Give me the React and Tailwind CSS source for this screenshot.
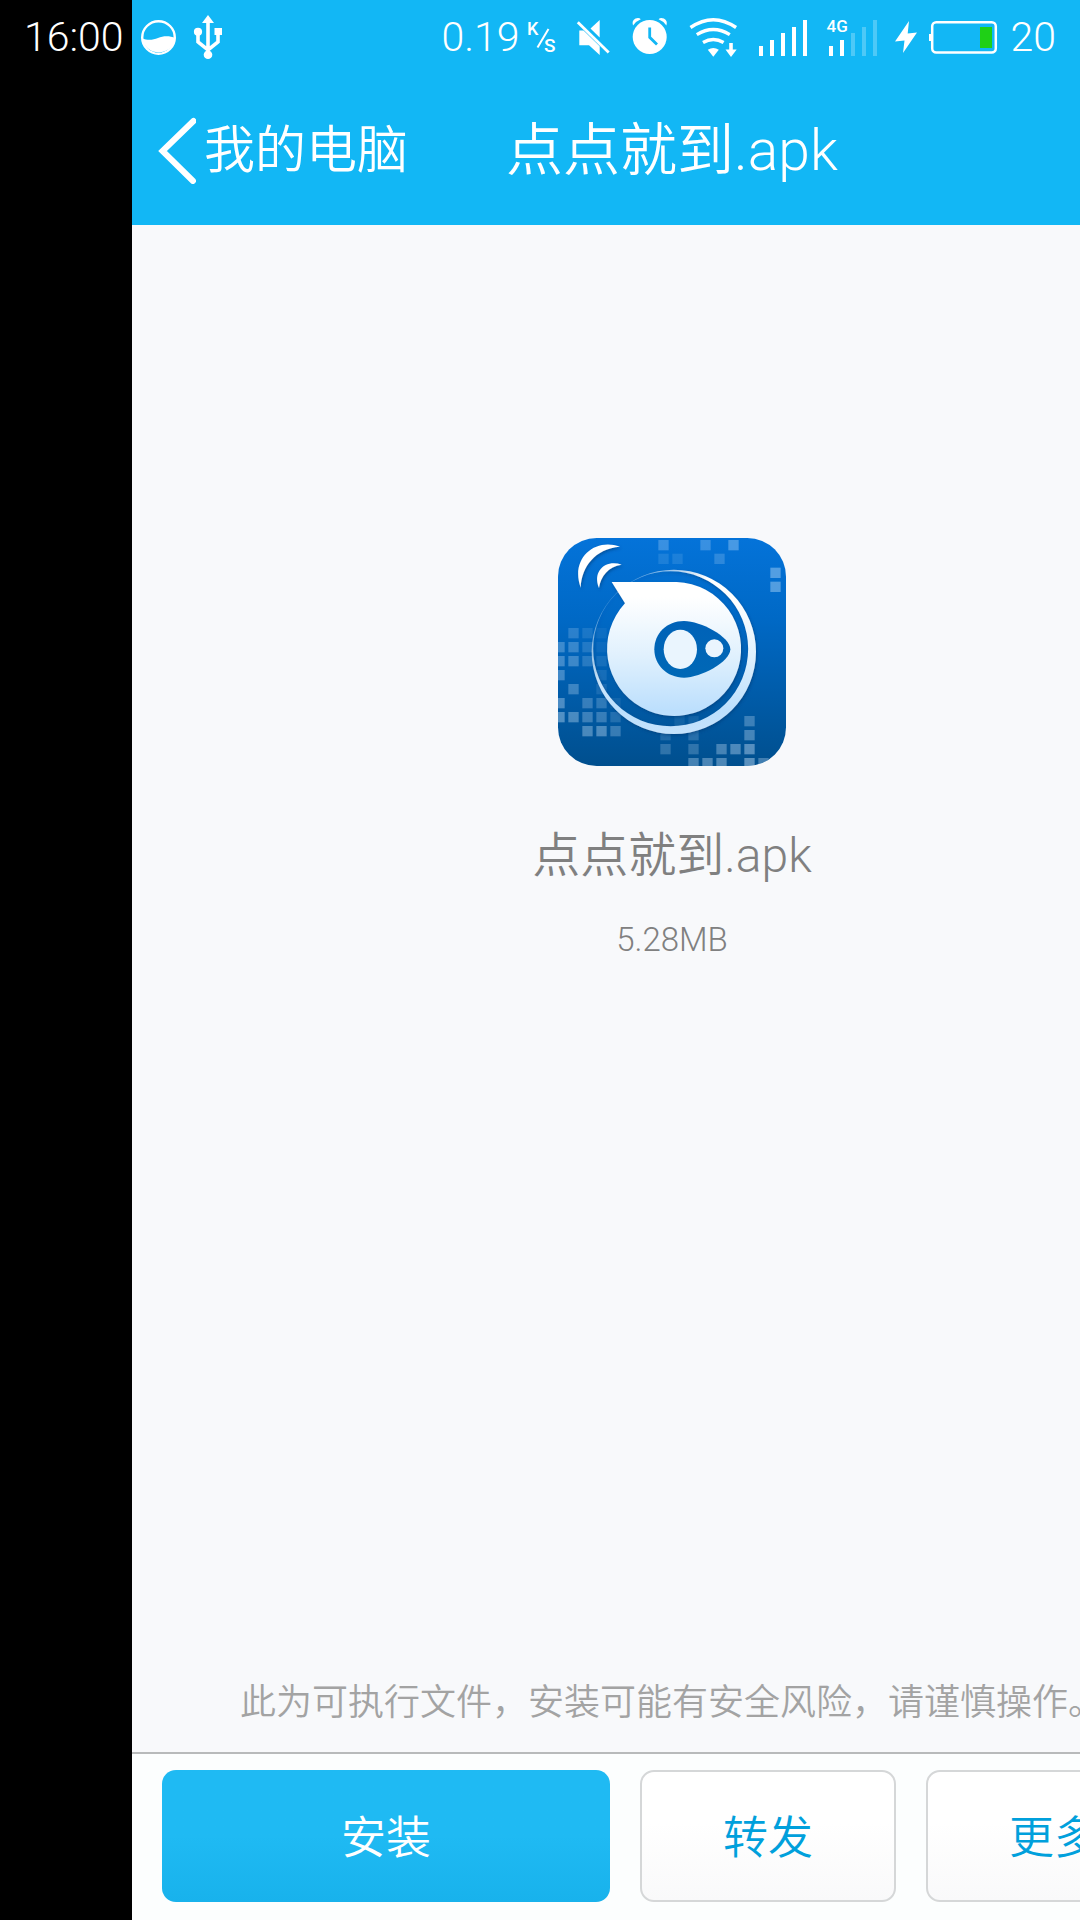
import React from "react";

const FONT = "font-['Roboto','Noto_Sans_CJK_SC',sans-serif]";

function DataSaverIcon() {
  return (
    <svg className="w-9 h-[75px] shrink-0" viewBox="141 0 36 75" aria-hidden="true">
      <circle cx="158.5" cy="37.5" r="16.3" fill="none" stroke="#fff" strokeWidth="2.4" />
      <path d="M142 38.5 C148 40.5 153 40 158 38 C163 36 169 35.5 175.5 38 A17 17 0 0 1 142 38.5Z" fill="#fff" />
    </svg>
  );
}

function UsbIcon() {
  return (
    <svg className="w-[30px] h-[75px] shrink-0" viewBox="193 0 30 75" fill="#fff" aria-hidden="true">
      <path d="M208 15 L214 23 H202Z" />
      <circle cx="208" cy="54.7" r="4.3" />
      <circle cx="198" cy="31.8" r="4.1" />
      <rect x="214.5" y="28" width="7.5" height="7" />
      <path d="M208 21 V55 M198 32 V42 L208 50 L218 42 V33" fill="none" stroke="#fff" strokeWidth="3.6" />
    </svg>
  );
}

function SpeedUnit() {
  return (
    <svg className="w-[37px] h-[75px] shrink-0" viewBox="524 0 37 75" fill="#fff" role="img" aria-label="K/S">
      <text x="527" y="35" fontSize="18" fontWeight="500" fontFamily="Roboto, sans-serif">K</text>
      <path d="M548.5 29 L537.5 47.5" stroke="#fff" strokeWidth="2" />
      <text x="544" y="52" fontSize="19" fontWeight="500" fontFamily="Roboto, sans-serif">S</text>
    </svg>
  );
}

function MuteIcon() {
  return (
    <svg className="w-[42px] h-[75px] shrink-0" viewBox="573 0 42 75" fill="#fff" aria-hidden="true">
      <path d="M599.7 20 V37.5 L590.5 28.6Z" />
      <path d="M579.3 30.5 H583.5 L599.7 46.2 V55 L589 45.3 H579.3Z" />
      <path d="M577.8 22.3 L608.7 52.5" stroke="#fff" strokeWidth="2.8" />
    </svg>
  );
}

function AlarmIcon() {
  return (
    <svg className="w-[45px] h-[75px] shrink-0" viewBox="627 0 45 75" fill="#fff" aria-hidden="true">
      <circle cx="649.7" cy="37" r="17" />
      <path d="M633 25.5 Q631.5 20.5 635.5 18.6 Q639 17.3 640.8 19.3 Q635.5 21.5 633 25.5Z" />
      <path d="M666.4 25.5 Q667.9 20.5 663.9 18.6 Q660.4 17.3 658.6 19.3 Q663.9 21.5 666.4 25.5Z" />
      <path d="M649.7 27.5 V37.3 L657 44.5" fill="none" stroke="#12b7f5" strokeWidth="2.8" />
    </svg>
  );
}

function WifiIcon() {
  return (
    <svg className="w-[57px] h-[75px] shrink-0" viewBox="684 0 57 75" fill="#fff" aria-hidden="true">
      <path
        d="M690.5 27.5 Q713.3 11.8 736.1 27.5 M696.8 34.6 Q713.3 24.5 729.8 34.6 M703 42.5 Q713.3 36.5 723.6 42.5"
        fill="none"
        stroke="#fff"
        strokeWidth="3.4"
      />
      <path d="M707.8 49.8 Q713.3 46.4 718.8 49.8 L713.3 56.8Z" />
      <path d="M729.2 43 H732.8 V49.5 H736.7 L731 57 L725.5 49.5 H729.2Z" />
    </svg>
  );
}

function SignalFull() {
  return (
    <svg className="w-[59px] h-[75px] shrink-0" viewBox="753 0 59 75" fill="#fff" aria-hidden="true">
      <path d="M759 46h4v10h-4z M770 40h4v16h-4z M781 33h4v23h-4z M792 27h4v29h-4z M803 20h4v36h-4z" />
    </svg>
  );
}

function Signal4G() {
  return (
    <svg className="w-[55px] h-[75px] shrink-0" viewBox="824 0 55 75" fill="#fff" role="img" aria-label="4G">
      <text x="826.5" y="32" fontSize="17" fontWeight="500" fontFamily="Roboto, sans-serif">4G</text>
      <path d="M829 46h4v10h-4z M840 40h4v16h-4z" />
      <path d="M851 33h4v23h-4z M862 27h4v29h-4z M873 20h4v36h-4z" opacity="0.25" />
    </svg>
  );
}

function BoltIcon() {
  return (
    <svg className="w-[26px] h-[75px] shrink-0" viewBox="891 0 26 75" fill="#fff" aria-hidden="true">
      <path d="M909 21 L895 41.5 L904.5 40.5 L903 53 L917 32.5 L907.7 33.5Z" />
    </svg>
  );
}

function BatteryIcon() {
  return (
    <svg className="w-[70px] h-[75px] shrink-0" viewBox="929 0 70 75" aria-hidden="true">
      <rect x="932.2" y="22.2" width="63.6" height="30.4" rx="4" fill="none" stroke="#fff" strokeWidth="2.5" />
      <rect x="929" y="34" width="3" height="7" fill="#fff" />
      <rect x="980" y="27" width="12" height="21" fill="#1fd016" />
    </svg>
  );
}

const TILES = [
  [355, 60, 0.25], [481, 60, 0.25], [565, 60, 0.32], [355, 101, 0.12], [397, 101, 0.12], [523, 101, 0.2],
  [691, 143, 0.38], [691, 185, 0.38],
  [85, 324, 0.2], [127, 324, 0.12], [169, 324, 0.06],
  [43, 366, 0.28], [85, 366, 0.26], [127, 366, 0.16], [169, 366, 0.05],
  [43, 408, 0.3], [85, 408, 0.28], [127, 408, 0.18], [169, 408, 0.1],
  [43, 450, 0.3], [169, 450, 0.1],
  [85, 492, 0.28], [169, 492, 0.12],
  [43, 534, 0.35], [127, 534, 0.25], [169, 534, 0.22], [211, 534, 0.08],
  [43, 576, 0.38], [85, 576, 0.34], [127, 576, 0.28], [169, 576, 0.26], [211, 576, 0.16],
  [127, 618, 0.34], [169, 618, 0.36], [211, 618, 0.26],
  [403, 588, 0.08], [445, 588, 0.08], [613, 588, 0.28],
  [361, 630, 0.15], [445, 630, 0.18], [613, 630, 0.32],
  [361, 672, 0.22], [445, 672, 0.22], [529, 672, 0.32], [571, 672, 0.36], [613, 672, 0.4],
  [445, 714, 0.32], [487, 714, 0.35], [529, 714, 0.36], [613, 714, 0.42], [655, 714, 0.3],
];

function AppIcon() {
  return (
    <svg className="w-[228px] h-[228px]" viewBox="54 54 684 684" role="img" aria-label="点点就到">
      <defs>
        <linearGradient id="bg" x1="0" y1="0" x2="0" y2="1">
          <stop offset="0" stopColor="#0473d9" />
          <stop offset="0.35" stopColor="#0069c6" />
          <stop offset="1" stopColor="#004f8e" />
        </linearGradient>
        <linearGradient id="face" x1="0" y1="186" x2="0" y2="640" gradientUnits="userSpaceOnUse">
          <stop offset="0.1" stopColor="#ffffff" />
          <stop offset="0.5" stopColor="#dff0fd" />
          <stop offset="0.85" stopColor="#bcdffd" />
          <stop offset="1" stopColor="#c4e2fc" />
        </linearGradient>
        <linearGradient id="eye" x1="0" y1="0" x2="0" y2="1">
          <stop offset="0" stopColor="#0062b8" />
          <stop offset="1" stopColor="#0068b6" />
        </linearGradient>
        <linearGradient id="fade" x1="200" y1="220" x2="330" y2="350" gradientUnits="userSpaceOnUse">
          <stop offset="0" stopColor="#fff" stopOpacity="0.25" />
          <stop offset="1" stopColor="#fff" />
        </linearGradient>
        <mask id="ring" maskUnits="userSpaceOnUse" x="54" y="54" width="684" height="684">
          <rect x="54" y="54" width="684" height="684" fill="url(#fade)" />
        </mask>
        <clipPath id="tile">
          <rect x="54" y="54" width="684" height="684" rx="116" />
        </clipPath>
        <filter id="shade" x="-20%" y="-20%" width="140%" height="140%">
          <feDropShadow dx="3" dy="5" stdDeviation="4" floodColor="#003b78" floodOpacity="0.6" />
        </filter>
      </defs>
      <g clipPath="url(#tile)">
        <rect x="54" y="54" width="684" height="684" fill="url(#bg)" />
        {TILES.map(([x, y, o]) => (
          <rect key={`${x}-${y}`} x={x} y={y} width="31" height="31" fill="#d6ecff" opacity={o} />
        ))}
        <g filter="url(#shade)">
          <path
            mask="url(#ring)"
            fillRule="evenodd"
            fill="url(#face)"
            d="M401.5 149 a246.5 246.5 0 1 1 0 493 a246.5 246.5 0 1 1 0 -493Z M392 154 a232.5 232.5 0 1 0 0 465 a232.5 232.5 0 1 0 0 -465Z"
          />
          <path fill="url(#face)" d="M215 186 H410 A201 201 0 1 1 255 250Z" />
          <path fill="#fff" d="M240 80 C165 52 90 115 122 203 C125 140 165 86 240 80Z" />
          <path fill="#fff" d="M245 134 C198 118 156 152 177 204 C182 168 205 140 245 134Z" />
        </g>
        <path
          fill="url(#eye)"
          d="M432 303 C482 303 571 350 571 388 C571 426 482 473 432 473 C380 473 343 435 343 388 C343 341 380 303 432 303Z"
        />
        <ellipse cx="421" cy="388" rx="50" ry="59" fill="#eaf5fe" />
        <circle cx="523" cy="385" r="27" fill="#eaf5fe" />
      </g>
    </svg>
  );
}

function StatusBar() {
  return (
    <div className="z-10 col-start-1 row-start-1 flex h-[75px] items-center justify-between self-start px-6 text-[41px] font-light leading-[75px] text-white">
      <div className="flex items-center gap-4">
        <time className="w-[101px]">16:00</time>
        <DataSaverIcon />
        <UsbIcon />
      </div>
      <div className="flex items-center gap-3">
        <div className="flex items-center gap-1">
          <span>0.19</span>
          <SpeedUnit />
        </div>
        <MuteIcon />
        <AlarmIcon />
        <WifiIcon />
        <SignalFull />
        <Signal4G />
        <BoltIcon />
        <BatteryIcon />
        <span>20</span>
      </div>
    </div>
  );
}

function Header() {
  return (
    <header className="bg-[#12b7f5] pt-[75px] font-[350] text-white">
      <div className="grid h-[150px] grid-cols-[1fr_auto_1fr] items-center px-6">
        <button type="button" className="flex items-center gap-2 justify-self-start text-[51px] leading-[75px]">
          <svg className="h-[68px] w-10" viewBox="0 0 40 68" fill="none" aria-hidden="true">
            <path d="M37.5 5 L6.5 35 L37 65" stroke="#fff" strokeWidth="6" strokeLinecap="round" />
          </svg>
          我的电脑
        </button>
        <h1 className="text-[57px] leading-[75px]">点点就到.apk</h1>
      </div>
    </header>
  );
}

function Actions() {
  const plain =
    "h-[132px] rounded-[14px] border-2 border-[#d5d7d8] bg-linear-to-b from-white from-40% to-[#f9f9fa] pt-1.5 text-[#00a0dc]";
  return (
    <footer className="grid grid-cols-[7fr_4fr_4fr] gap-[30px] border-t-2 border-[#b8babb] bg-[#fcfefe] px-[30px] pb-[18px] pt-4 text-[45px] font-[350] leading-[60px]">
      <button
        type="button"
        className="h-[132px] rounded-[14px] bg-linear-to-b from-[#1fbaf3] from-50% to-[#18b2ec] pt-1.5 text-white"
      >
        安装
      </button>
      <button type="button" className={plain}>转发</button>
      <button type="button" className={plain}>更多</button>
    </footer>
  );
}

export default function App() {
  return (
    <div lang="zh-CN" className={`grid min-h-screen grid-cols-1 overflow-hidden bg-black ${FONT}`}>
      <StatusBar />
      <div className="col-start-1 row-start-1 flex min-w-0 pl-[132px]">
        <div className="flex w-screen shrink-0 flex-col bg-[#f8f9fb]">
          <Header />
          <main className="flex flex-1 flex-col items-center pt-[313px] font-[350]">
            <AppIcon />
            <p className="mt-[60px] text-[48px] leading-[60px] text-[#808080]">点点就到.apk</p>
            <p className="mt-[34px] text-[33px] leading-10 text-[#808080]">5.28MB</p>
            <p className="mb-6 mt-auto whitespace-nowrap text-[36px] leading-[50px] text-[#a3a3a3]">
              此为可执行文件，安装可能有安全风险，请谨慎操作。
            </p>
          </main>
          <Actions />
        </div>
      </div>
    </div>
  );
}
